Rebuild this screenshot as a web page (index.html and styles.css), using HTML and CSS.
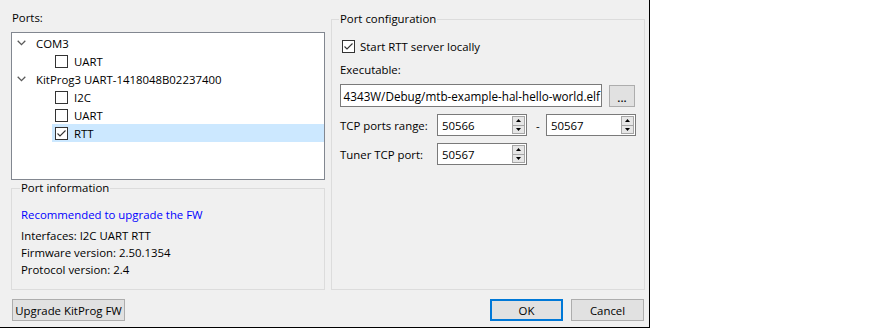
FILE: index.html
```html
<!DOCTYPE html>
<html>
<head>
<meta charset="utf-8">
<link rel="stylesheet" href="styles.css">
</head>
<body>
<div class="dialog">
  <div class="main">
    <div class="col-left">
      <div class="label">Ports:</div>
      <div class="tree">
        <div class="row top">
          <svg class="chev" width="9" height="6" viewBox="0 0 9 6"><polyline points="0.7,0.8 4.5,4.6 8.3,0.8" fill="none" stroke="#5a5a5a" stroke-width="1.3"/></svg>
          <span>COM3</span>
        </div>
        <div class="row child"><span class="cb"></span><span>UART</span></div>
        <div class="row top">
          <svg class="chev" width="9" height="6" viewBox="0 0 9 6"><polyline points="0.7,0.8 4.5,4.6 8.3,0.8" fill="none" stroke="#5a5a5a" stroke-width="1.3"/></svg>
          <span>KitProg3 UART-1418048B02237400</span>
        </div>
        <div class="row child"><span class="cb"></span><span>I2C</span></div>
        <div class="row child"><span class="cb"></span><span>UART</span></div>
        <div class="row child selected"><span class="cb"><svg width="11" height="11" viewBox="0 0 11 11"><polyline points="1.5,5.5 4,8 9.5,2.5" fill="none" stroke="#333" stroke-width="1.1"/></svg></span><span>RTT</span></div>
      </div>
      <fieldset class="group info">
        <legend>Port information</legend>
        <div class="link">Recommended to upgrade the FW</div>
        <div class="info-lines">
          <div>Interfaces: I2C UART RTT</div>
          <div>Firmware version: 2.50.1354</div>
          <div>Protocol version: 2.4</div>
        </div>
      </fieldset>
    </div>
    <fieldset class="group config">
      <legend>Port configuration</legend>
      <div class="check-row"><span class="cb"><svg width="11" height="11" viewBox="0 0 11 11"><polyline points="1.5,5.5 4,8 9.5,2.5" fill="none" stroke="#333" stroke-width="1.1"/></svg></span><span>Start RTT server locally</span></div>
      <div class="exe-label">Executable:</div>
      <div class="exe-row">
        <div class="input exe"><span>4343W/Debug/mtb-example-hal-hello-world.elf</span></div>
        <div class="btn dots">...</div>
      </div>
      <div class="ports">
        <div class="plabel">TCP ports range:</div>
        <div class="prow">
          <div class="spin"><span class="val">50566</span><div class="arrows"><div class="ab"><svg width="5" height="3" viewBox="0 0 5 3"><polygon points="0,3 2.5,0 5,3" fill="#000"/></svg></div><div class="ab"><svg width="5" height="3" viewBox="0 0 5 3"><polygon points="0,0 2.5,3 5,0" fill="#000"/></svg></div></div></div>
          <span class="dash">-</span>
          <div class="spin"><span class="val">50567</span><div class="arrows"><div class="ab"><svg width="5" height="3" viewBox="0 0 5 3"><polygon points="0,3 2.5,0 5,3" fill="#000"/></svg></div><div class="ab"><svg width="5" height="3" viewBox="0 0 5 3"><polygon points="0,0 2.5,3 5,0" fill="#000"/></svg></div></div></div>
        </div>
        <div class="plabel">Tuner TCP port:</div>
        <div class="prow">
          <div class="spin"><span class="val">50567</span><div class="arrows"><div class="ab"><svg width="5" height="3" viewBox="0 0 5 3"><polygon points="0,3 2.5,0 5,3" fill="#000"/></svg></div><div class="ab"><svg width="5" height="3" viewBox="0 0 5 3"><polygon points="0,0 2.5,3 5,0" fill="#000"/></svg></div></div></div>
        </div>
      </div>
    </fieldset>
  </div>
  <div class="footer">
    <div class="btn upgrade">Upgrade KitProg FW</div>
    <div class="spacer"></div>
    <div class="btn ok">OK</div>
    <div class="btn cancel">Cancel</div>
  </div>
</div>
</body>
</html>
```

FILE: styles.css
```css
* { box-sizing: border-box; }
body {
  margin: 0;
  background: #fff;
  font-family: "Segoe UI", "Open Sans", sans-serif;
  font-size: 11.4px;
  color: #000;
}
.dialog {
  width: 650px;
  height: 328px;
  background: #f0f0f0;
  border-right: 1px solid #000;
  border-bottom: 1px solid #000;
  padding: 10px 4px 0 11px;
  display: flex;
  flex-direction: column;
}
.main {
  display: flex;
  gap: 6px;
  height: 280px;
}
.col-left {
  width: 314px;
  display: flex;
  flex-direction: column;
}
.label {
  line-height: 16px;
  height: 16px;
  margin-bottom: 6px;
  padding-left: 1px;
}
.tree {
  height: 148px;
  border: 1px solid #828790;
  background: #fff;
  padding-top: 1px;
}
.row {
  height: 18px;
  display: flex;
  align-items: center;
  white-space: nowrap;
}
.row.top { padding-left: 5px; }
.row.top .chev { margin-right: 10px; flex: none; }
.row.child { margin-left: 40px; padding-left: 3px; }
.row.child .cb { margin-right: 6px; }
.row.selected { background: #cce8ff; }
.cb {
  width: 13px;
  height: 13px;
  border: 1px solid #333;
  background: #fff;
  flex: none;
  display: flex;
  align-items: center;
  justify-content: center;
}
fieldset.group {
  margin: 0;
  border: 1px solid #dcdcdc;
  min-width: 0;
}
fieldset.group legend {
  padding: 0 1px;
  margin-left: -1px;
  line-height: 16px;
}
.info {
  margin-top: 7px;
  flex: 1;
  padding: 0 8px 0 9px;
}
.link {
  margin-top: 11px;
  line-height: 16px;
  color: #0000ff;
}
.info-lines {
  margin-top: 4px;
  line-height: 17px;
}
.config {
  width: 314px;
  margin-top: 1px !important;
  padding: 0 8px 0 8px;
}
.check-row {
  margin-top: 11px;
  height: 16px;
  display: flex;
  align-items: center;
  padding-left: 2px;
}
.check-row .cb { margin-right: 5px; }
.exe-label {
  margin-top: 8px;
  line-height: 16px;
}
.exe-row {
  margin-top: 6px;
  display: flex;
  align-items: flex-start;
  gap: 7px;
}
.input {
  background: #fff;
  border: 1px solid #7a7a7a;
}
.exe {
  width: 262px;
  height: 23px;
  display: flex;
  justify-content: flex-end;
  align-items: center;
  overflow: hidden;
  white-space: nowrap;
  padding: 0 1px 0 1px;
  font-size: 11.7px;
}
.btn {
  background: #e1e1e1;
  border: 1px solid #adadad;
  display: flex;
  align-items: center;
  justify-content: center;
  white-space: nowrap;
}
.dots {
  width: 26px;
  height: 22px;
  margin-top: 1px;
  line-height: 1;
  padding-top: 4px;
  font-weight: 600;
}
.ports {
  margin-top: 7px;
  display: grid;
  grid-template-columns: 97px auto;
  row-gap: 7px;
  align-items: center;
}
.prow {
  display: flex;
  align-items: center;
}
.spin {
  width: 90px;
  height: 22px;
  background: #fff;
  border: 1px solid #7a7a7a;
  display: flex;
  align-items: stretch;
}
.spin .val {
  flex: 1;
  padding-left: 4px;
  display: flex;
  align-items: center;
}
.arrows {
  width: 14px;
  display: flex;
  flex-direction: column;
  padding: 1px 1px 1px 0;
  gap: 0;
}
.ab {
  flex: 1;
  background: #e6e6e6;
  border: 1px solid #a6a6a6;
  display: flex;
  align-items: center;
  justify-content: center;
}
.ab + .ab { border-top: none; }
.dash {
  margin: 0 6px 0 9px;
  width: 4px;
}
.footer {
  margin-top: 9px;
  display: flex;
  height: 22px;
  padding-left: 1px;
}
.upgrade { width: 113px; }
.spacer { flex: 1; }
.ok {
  width: 73px;
  border: 2px solid #0078d7;
  margin-right: 8px;
}
.cancel {
  width: 73px;
  margin-right: 1px;
}
```
